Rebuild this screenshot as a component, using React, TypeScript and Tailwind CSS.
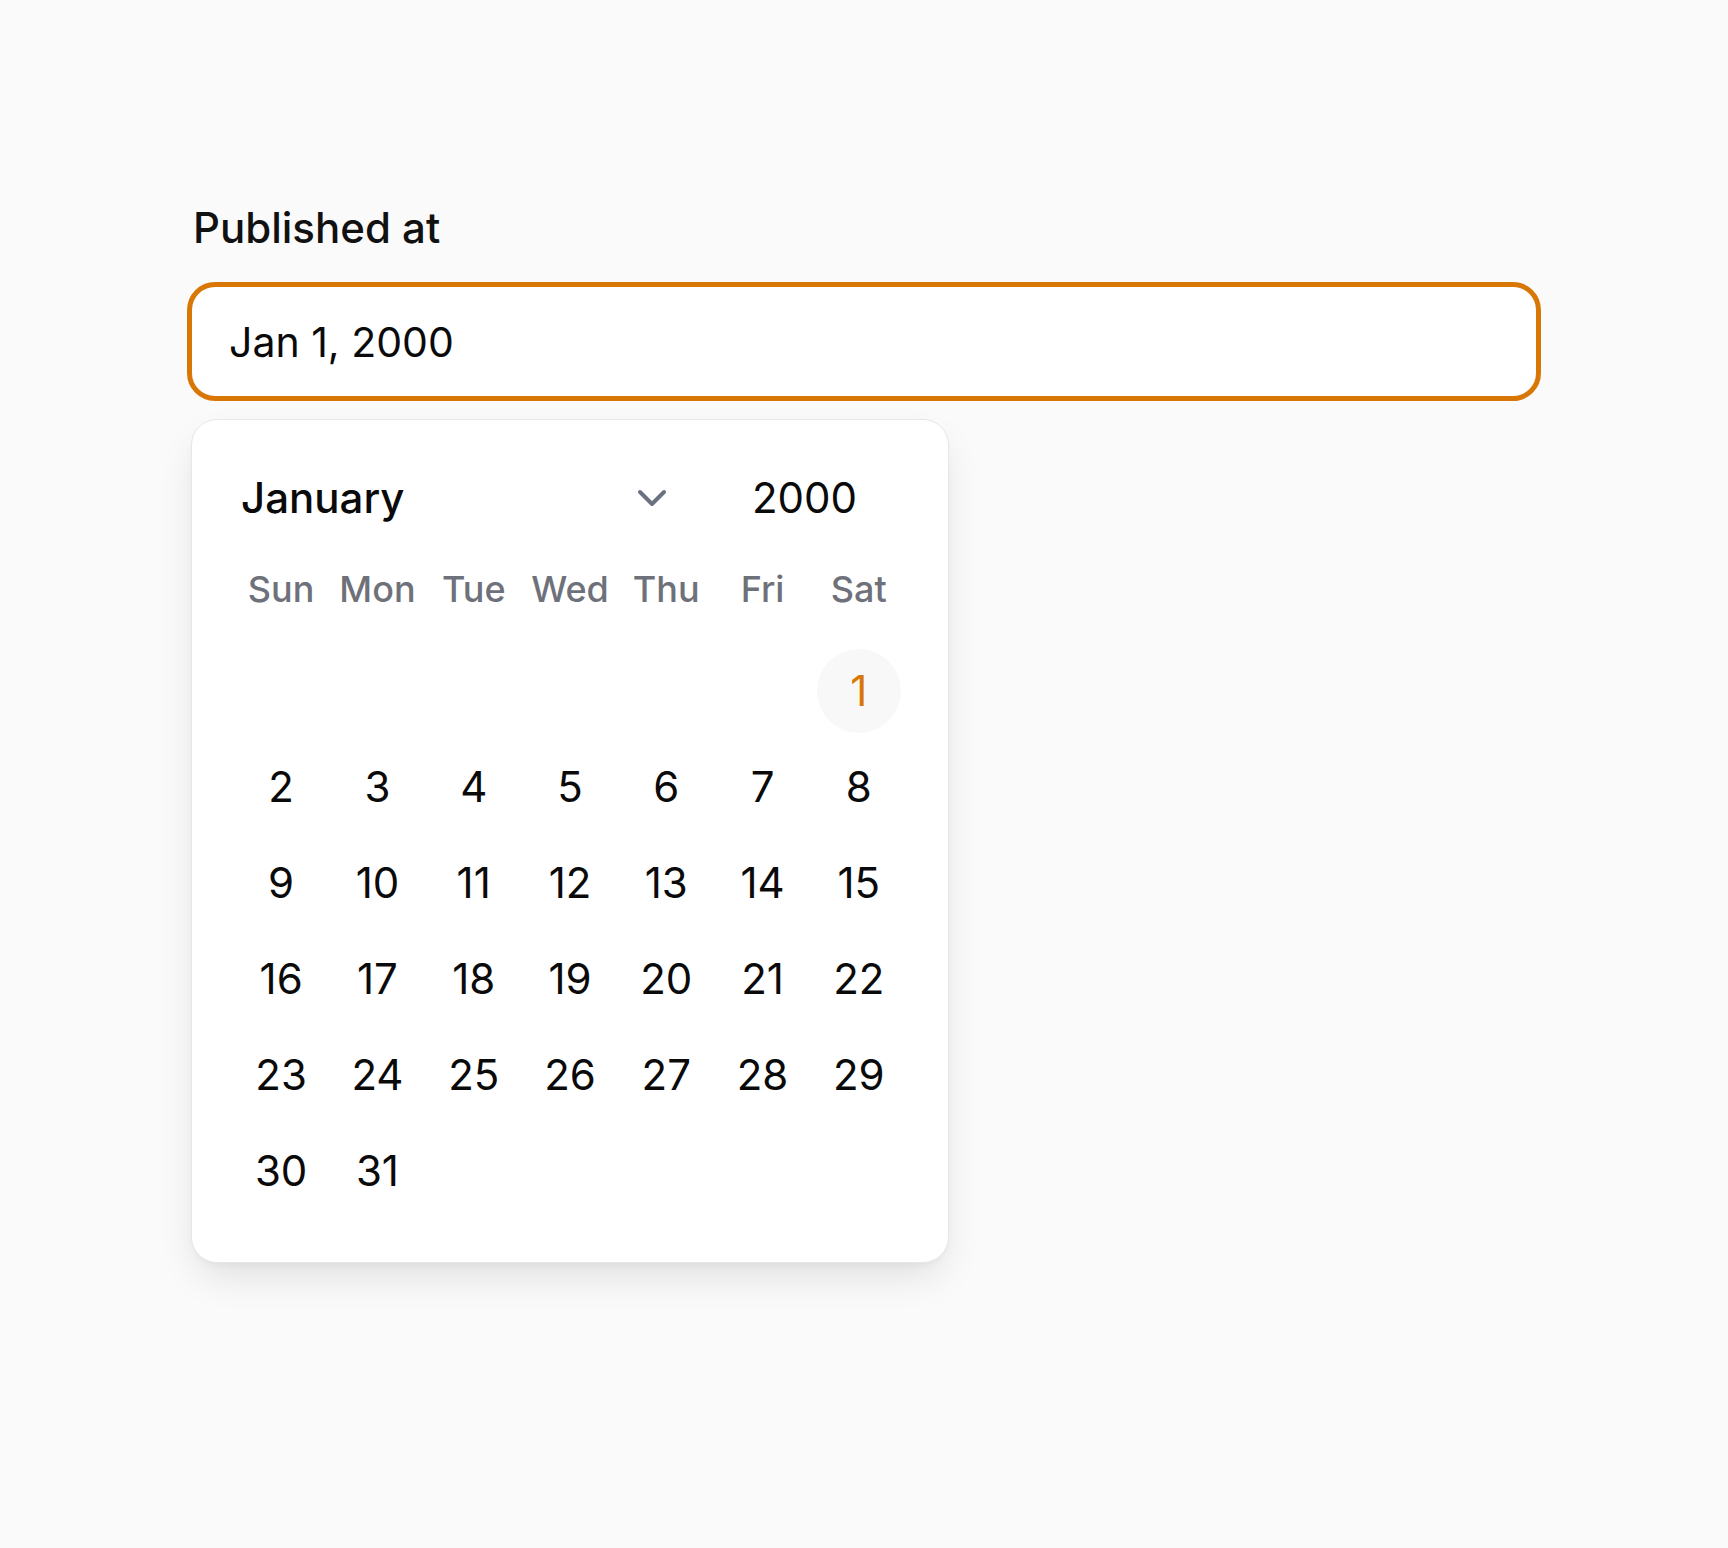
import React from "react";

const weekdays = ["Sun", "Mon", "Tue", "Wed", "Thu", "Fri", "Sat"];

// January 2000 starts on a Saturday
const cells: (number | null)[] = [
  ...Array(6).fill(null),
  ...Array.from({ length: 31 }, (_, i) => i + 1),
];

const Chevron = () => (
  <svg width="32" height="20" viewBox="0 0 32 20" fill="none" className="text-gray-500">
    <path d="M4 4 L16 16 L28 4" stroke="currentColor" strokeWidth="4" strokeLinecap="round" strokeLinejoin="round" />
  </svg>
);

export default function App() {
  return (
    <div
      className="min-h-screen bg-[#fafafa] text-[#0a0a0a]"
      style={{ fontFamily: "Inter, 'Noto Sans', sans-serif" }}
    >
      <div className="mx-auto w-[1354px] pt-[198px]">
        <label className="block ml-[6px] text-[42px] leading-[60px] font-medium text-[#111]">Published at</label>

        <div className="mt-[24px] h-[119px] rounded-[28px] border-[5px] border-[#d97706] bg-white flex items-center pl-[37px]">
          <span className="text-[41px] leading-[60px]">Jan 1, 2000</span>
        </div>

        {/* Calendar popover */}
        <div className="mt-[18px] ml-[4px] w-[758px] rounded-[26px] border border-[#e7e7e7] bg-white px-[41px] pt-[41px] pb-[43px] shadow-[0_18px_40px_-8px_rgba(0,0,0,0.12),0_4px_10px_-4px_rgba(0,0,0,0.06)]">
          <div className="h-[74px] flex items-center">
            <button className="w-[445px] flex items-center justify-between pl-[8px] pr-[10px]">
              <span className="text-[42px] leading-[56px] font-medium">January</span>
              <Chevron />
            </button>
            <span className="ml-[74px] text-[42px] leading-[56px]">2000</span>
          </div>

          <div className="grid grid-cols-7 h-[108px] items-center">
            {weekdays.map((d) => (
              <div key={d} className="text-center text-[36px] leading-[48px] font-medium text-[#6e717a]">
                {d}
              </div>
            ))}
          </div>

          <div className="grid grid-cols-7">
            {cells.map((day, i) => (
              <div key={i} className="h-[96px] flex items-center justify-center">
                {day === 1 ? (
                  <span className="w-[84px] h-[84px] rounded-full bg-[#f8f8f8] flex items-center justify-center text-[42px] leading-[60px] text-[#d97706]">
                    1
                  </span>
                ) : day ? (
                  <span className="text-[42px] leading-[60px]">{day}</span>
                ) : null}
              </div>
            ))}
          </div>
        </div>
      </div>
    </div>
  );
}
